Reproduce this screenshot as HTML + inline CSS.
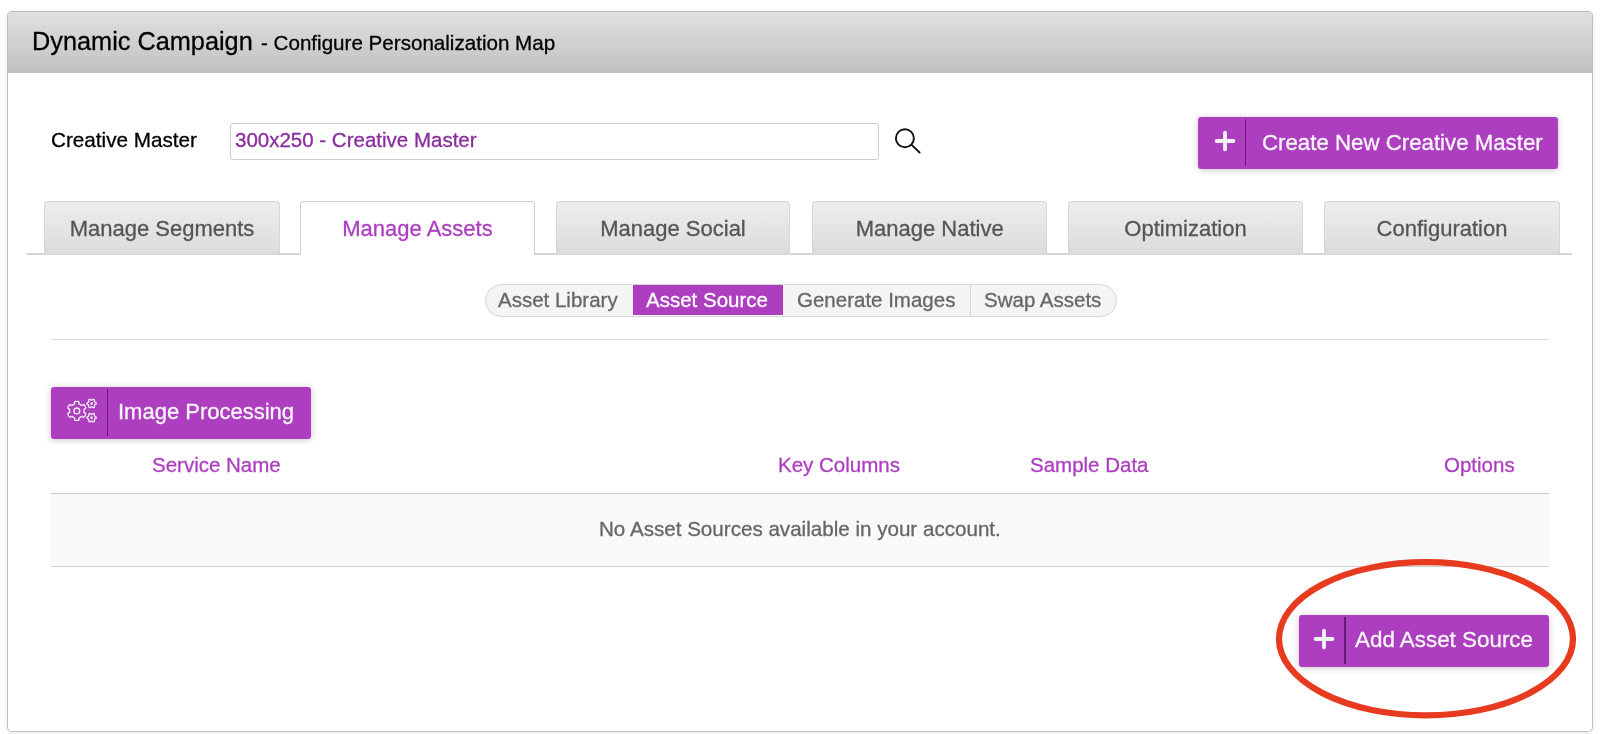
<!DOCTYPE html>
<html><head><meta charset="utf-8"><style>
html,body{margin:0;padding:0;background:#fff;width:1600px;height:734px;overflow:hidden;}
body{font-family:"Liberation Sans",sans-serif;position:relative;}
.t{position:absolute;white-space:nowrap;will-change:transform;-webkit-text-stroke:0.3px currentColor;}
.abs{position:absolute;box-sizing:border-box;}
</style></head><body>
<div class="abs" style="left:7px;top:11px;width:1586px;height:721px;border:1px solid #c2c2c2;border-top-color:#bababa;border-radius:5px;box-shadow:0 1px 4px rgba(0,0,0,0.10);background:#fff;"></div>
<div class="abs" style="left:8px;top:12px;width:1584px;height:61px;border-radius:4px 4px 0 0;background:linear-gradient(#e0e0e0,#c1c1c1);"></div>
<div class="t" style="left:32px;top:26.33px;font-size:25.3px;line-height:30px;color:#000;">Dynamic Campaign</div>
<div class="t" style="left:260.8px;top:30.36px;font-size:20.6px;line-height:25px;color:#000;">- Configure Personalization Map</div>
<div class="t" style="left:51px;top:126.73px;font-size:20.7px;line-height:25px;color:#000;">Creative Master</div>
<div class="abs" style="left:229.5px;top:122.5px;width:649.5px;height:37px;border:1px solid #cbcbcb;border-radius:3px;background:#fff;"></div>
<div class="t" style="left:235px;top:127.10px;font-size:20.5px;line-height:25px;color:#8a2c9c;">300x250 - Creative Master</div>
<svg class="abs" style="left:890px;top:124px" width="36" height="36" viewBox="0 0 36 36"><circle cx="14.9" cy="14.2" r="9" fill="none" stroke="#111" stroke-width="1.9"/><line x1="21.6" y1="20.9" x2="29.6" y2="28.5" stroke="#111" stroke-width="1.9" stroke-linecap="round"/></svg>
<div class="abs" style="left:1198px;top:117px;width:360px;height:52px;background:#ad3ec0;border-radius:3px;box-shadow:0 1px 7px rgba(0,0,0,0.22);"></div>
<div class="abs" style="left:1244.5px;top:119px;width:1.7px;height:47px;background:#621d72;"></div>
<svg class="abs" style="left:1210px;top:126.4px" width="30" height="30" viewBox="0 0 30 30"><path d="M15 6.6V23.4M6.6 15H23.4" stroke="#f3f3f3" stroke-width="3.8" stroke-linecap="round"/></svg>
<div class="t" style="left:1262.3px;top:129.49px;font-size:22.25px;line-height:27px;color:#f6f6f6;">Create New Creative Master</div>
<div class="abs" style="left:27px;top:253px;width:1545px;height:1.5px;background:#d5d5d5;"></div>
<div class="abs" style="left:43.5px;top:201px;width:236px;height:53px;border:1px solid #d6d6d6;border-bottom:none;border-radius:4px 4px 0 0;background:linear-gradient(#ededed,#dcdcdc);"></div>
<div class="t" style="left:43.5px;top:213.98px;width:236px;text-align:center;font-size:22px;line-height:30px;color:#555">Manage Segments</div>
<div class="abs" style="left:299.5px;top:201px;width:235px;height:54px;border:1px solid #d0d0d0;border-bottom:none;border-radius:4px 4px 0 0;background:#fff;"></div>
<div class="t" style="left:299.5px;top:213.98px;width:235px;text-align:center;font-size:22px;line-height:30px;color:#ad3ec0">Manage Assets</div>
<div class="abs" style="left:556px;top:201px;width:234px;height:53px;border:1px solid #d6d6d6;border-bottom:none;border-radius:4px 4px 0 0;background:linear-gradient(#ededed,#dcdcdc);"></div>
<div class="t" style="left:556px;top:213.98px;width:234px;text-align:center;font-size:22px;line-height:30px;color:#555">Manage Social</div>
<div class="abs" style="left:811.5px;top:201px;width:235.5px;height:53px;border:1px solid #d6d6d6;border-bottom:none;border-radius:4px 4px 0 0;background:linear-gradient(#ededed,#dcdcdc);"></div>
<div class="t" style="left:811.5px;top:213.98px;width:235.5px;text-align:center;font-size:22px;line-height:30px;color:#555">Manage Native</div>
<div class="abs" style="left:1068px;top:201px;width:235px;height:53px;border:1px solid #d6d6d6;border-bottom:none;border-radius:4px 4px 0 0;background:linear-gradient(#ededed,#dcdcdc);"></div>
<div class="t" style="left:1068px;top:213.98px;width:235px;text-align:center;font-size:22px;line-height:30px;color:#555">Optimization</div>
<div class="abs" style="left:1324px;top:201px;width:236px;height:53px;border:1px solid #d6d6d6;border-bottom:none;border-radius:4px 4px 0 0;background:linear-gradient(#ededed,#dcdcdc);"></div>
<div class="t" style="left:1324px;top:213.98px;width:236px;text-align:center;font-size:22px;line-height:30px;color:#555">Configuration</div>
<div class="abs" style="left:484.5px;top:283.5px;width:632px;height:33px;border:1px solid #d6d6d6;border-radius:17px;background:#f4f4f4;overflow:hidden;"></div>
<div class="abs" style="left:633px;top:285px;width:149.5px;height:30px;background:#ad3ec0;"></div>
<div class="abs" style="left:970px;top:284.5px;width:1px;height:31px;background:#d6d6d6;"></div>
<div class="t" style="left:497.8px;top:287.30px;font-size:20.5px;line-height:25px;color:#666;">Asset Library</div>
<div class="t" style="left:645.6px;top:287.30px;font-size:20.5px;line-height:25px;color:#fff;">Asset Source</div>
<div class="t" style="left:796.8px;top:287.30px;font-size:20.5px;line-height:25px;color:#666;">Generate Images</div>
<div class="t" style="left:983.9px;top:287.30px;font-size:20.5px;line-height:25px;color:#666;">Swap Assets</div>
<div class="abs" style="left:51px;top:339px;width:1498px;height:1px;background:#dcdcdc;"></div>
<div class="abs" style="left:51px;top:386.5px;width:260px;height:52px;background:#ad3ec0;border-radius:3px;box-shadow:0 1px 7px rgba(0,0,0,0.22);"></div>
<div class="abs" style="left:106.5px;top:388.5px;width:1.7px;height:47px;background:#621d72;"></div>
<svg class="abs" style="left:62px;top:395px" width="40" height="32" viewBox="0 0 40 32"><g fill="none" stroke="#f0f0f0" stroke-width="1.35" stroke-linejoin="round"><path d="M22.00 15.90 L22.00 15.71 L21.99 15.52 L21.98 15.34 L21.96 15.15 L21.94 14.96 L21.92 14.77 L21.92 14.58 L22.00 14.37 L22.37 14.08 L23.14 13.67 L23.66 13.28 L23.78 12.98 L23.74 12.73 L23.67 12.50 L23.58 12.26 L23.48 12.04 L23.37 11.81 L23.26 11.59 L23.15 11.37 L23.03 11.15 L22.90 10.94 L22.77 10.73 L22.63 10.52 L22.49 10.32 L22.34 10.12 L22.18 9.92 L22.01 9.74 L21.81 9.58 L21.50 9.54 L20.90 9.80 L20.16 10.25 L19.73 10.43 L19.50 10.39 L19.34 10.30 L19.19 10.19 L19.03 10.07 L18.88 9.97 L18.72 9.86 L18.56 9.76 L18.40 9.66 L18.24 9.57 L18.07 9.48 L17.90 9.40 L17.73 9.32 L17.56 9.25 L17.38 9.17 L17.22 9.08 L17.07 8.90 L17.01 8.43 L17.03 7.56 L16.96 6.91 L16.76 6.67 L16.53 6.57 L16.29 6.52 L16.04 6.48 L15.79 6.45 L15.55 6.43 L15.30 6.41 L15.05 6.40 L14.80 6.40 L14.55 6.40 L14.30 6.41 L14.05 6.43 L13.81 6.45 L13.56 6.48 L13.31 6.52 L13.07 6.57 L12.84 6.67 L12.64 6.91 L12.57 7.56 L12.59 8.43 L12.53 8.90 L12.38 9.08 L12.22 9.17 L12.04 9.25 L11.87 9.32 L11.70 9.40 L11.53 9.48 L11.36 9.57 L11.20 9.66 L11.04 9.76 L10.88 9.86 L10.72 9.97 L10.57 10.07 L10.41 10.19 L10.26 10.30 L10.10 10.39 L9.87 10.43 L9.44 10.25 L8.70 9.80 L8.10 9.54 L7.79 9.58 L7.59 9.74 L7.42 9.92 L7.26 10.12 L7.11 10.32 L6.97 10.52 L6.83 10.73 L6.70 10.94 L6.57 11.15 L6.45 11.37 L6.34 11.59 L6.23 11.81 L6.12 12.04 L6.02 12.26 L5.93 12.50 L5.86 12.73 L5.82 12.98 L5.94 13.28 L6.46 13.67 L7.23 14.08 L7.60 14.37 L7.68 14.58 L7.68 14.77 L7.66 14.96 L7.64 15.15 L7.62 15.34 L7.61 15.52 L7.60 15.71 L7.60 15.90 L7.60 16.09 L7.61 16.28 L7.62 16.46 L7.64 16.65 L7.66 16.84 L7.68 17.03 L7.68 17.22 L7.60 17.43 L7.23 17.72 L6.46 18.13 L5.94 18.52 L5.82 18.82 L5.86 19.07 L5.93 19.30 L6.02 19.54 L6.12 19.76 L6.23 19.99 L6.34 20.21 L6.45 20.43 L6.57 20.65 L6.70 20.86 L6.83 21.07 L6.97 21.28 L7.11 21.48 L7.26 21.68 L7.42 21.88 L7.59 22.06 L7.79 22.22 L8.10 22.26 L8.70 22.00 L9.44 21.55 L9.87 21.37 L10.10 21.41 L10.26 21.50 L10.41 21.61 L10.57 21.73 L10.72 21.83 L10.88 21.94 L11.04 22.04 L11.20 22.14 L11.36 22.23 L11.53 22.32 L11.70 22.40 L11.87 22.48 L12.04 22.55 L12.22 22.63 L12.38 22.72 L12.53 22.90 L12.59 23.37 L12.57 24.24 L12.64 24.89 L12.84 25.13 L13.07 25.23 L13.31 25.28 L13.56 25.32 L13.81 25.35 L14.05 25.37 L14.30 25.39 L14.55 25.40 L14.80 25.40 L15.05 25.40 L15.30 25.39 L15.55 25.37 L15.79 25.35 L16.04 25.32 L16.29 25.28 L16.53 25.23 L16.76 25.13 L16.96 24.89 L17.03 24.24 L17.01 23.37 L17.07 22.90 L17.22 22.72 L17.38 22.63 L17.56 22.55 L17.73 22.48 L17.90 22.40 L18.07 22.32 L18.24 22.23 L18.40 22.14 L18.56 22.04 L18.72 21.94 L18.88 21.83 L19.03 21.73 L19.19 21.61 L19.34 21.50 L19.50 21.41 L19.73 21.37 L20.16 21.55 L20.90 22.00 L21.50 22.26 L21.81 22.22 L22.01 22.06 L22.18 21.88 L22.34 21.68 L22.49 21.48 L22.63 21.28 L22.77 21.07 L22.90 20.86 L23.03 20.65 L23.15 20.43 L23.26 20.21 L23.37 19.99 L23.48 19.76 L23.58 19.54 L23.67 19.30 L23.74 19.07 L23.78 18.82 L23.66 18.52 L23.14 18.13 L22.37 17.72 L22.00 17.43 L21.92 17.22 L21.92 17.03 L21.94 16.84 L21.96 16.65 L21.98 16.46 L21.99 16.28 L22.00 16.09Z"/><circle cx="14.8" cy="15.9" r="2.9"/><path d="M34.20 8.50 L34.20 8.38 L34.18 8.26 L34.16 8.14 L34.13 8.02 L34.08 7.91 L34.01 7.80 L33.92 7.70 L33.79 7.61 L33.64 7.53 L33.46 7.46 L33.29 7.41 L33.13 7.35 L33.00 7.30 L32.90 7.23 L32.81 7.17 L32.75 7.10 L32.69 7.03 L32.64 6.95 L32.59 6.88 L32.54 6.80 L32.50 6.72 L32.46 6.64 L32.42 6.56 L32.39 6.48 L32.36 6.38 L32.34 6.28 L32.34 6.16 L32.36 6.02 L32.39 5.85 L32.43 5.67 L32.46 5.49 L32.47 5.31 L32.45 5.16 L32.41 5.03 L32.35 4.91 L32.28 4.81 L32.19 4.73 L32.10 4.65 L32.00 4.58 L31.90 4.52 L31.79 4.46 L31.68 4.41 L31.57 4.37 L31.45 4.34 L31.33 4.32 L31.20 4.33 L31.07 4.36 L30.92 4.42 L30.78 4.52 L30.64 4.64 L30.50 4.76 L30.37 4.87 L30.26 4.95 L30.15 5.01 L30.05 5.05 L29.96 5.07 L29.87 5.09 L29.78 5.10 L29.69 5.10 L29.60 5.10 L29.51 5.10 L29.42 5.10 L29.33 5.09 L29.24 5.07 L29.15 5.05 L29.05 5.01 L28.94 4.95 L28.83 4.87 L28.70 4.76 L28.56 4.64 L28.42 4.52 L28.28 4.42 L28.13 4.36 L28.00 4.33 L27.87 4.32 L27.75 4.34 L27.63 4.37 L27.52 4.41 L27.41 4.46 L27.30 4.52 L27.20 4.58 L27.10 4.65 L27.01 4.73 L26.92 4.81 L26.85 4.91 L26.79 5.03 L26.75 5.16 L26.73 5.31 L26.74 5.49 L26.77 5.67 L26.81 5.85 L26.84 6.02 L26.86 6.16 L26.86 6.28 L26.84 6.38 L26.81 6.48 L26.78 6.56 L26.74 6.64 L26.70 6.72 L26.66 6.80 L26.61 6.88 L26.56 6.95 L26.51 7.03 L26.45 7.10 L26.39 7.17 L26.30 7.23 L26.20 7.30 L26.07 7.35 L25.91 7.41 L25.74 7.46 L25.56 7.53 L25.41 7.61 L25.28 7.70 L25.19 7.80 L25.12 7.91 L25.07 8.02 L25.04 8.14 L25.02 8.26 L25.00 8.38 L25.00 8.50 L25.00 8.62 L25.02 8.74 L25.04 8.86 L25.07 8.98 L25.12 9.09 L25.19 9.20 L25.28 9.30 L25.41 9.39 L25.56 9.47 L25.74 9.54 L25.91 9.59 L26.07 9.65 L26.20 9.70 L26.30 9.77 L26.39 9.83 L26.45 9.90 L26.51 9.97 L26.56 10.05 L26.61 10.12 L26.66 10.20 L26.70 10.28 L26.74 10.36 L26.78 10.44 L26.81 10.52 L26.84 10.62 L26.86 10.72 L26.86 10.84 L26.84 10.98 L26.81 11.15 L26.77 11.33 L26.74 11.51 L26.73 11.69 L26.75 11.84 L26.79 11.97 L26.85 12.09 L26.92 12.19 L27.01 12.27 L27.10 12.35 L27.20 12.42 L27.30 12.48 L27.41 12.54 L27.52 12.59 L27.63 12.63 L27.75 12.66 L27.87 12.68 L28.00 12.67 L28.13 12.64 L28.28 12.58 L28.42 12.48 L28.56 12.36 L28.70 12.24 L28.83 12.13 L28.94 12.05 L29.05 11.99 L29.15 11.95 L29.24 11.93 L29.33 11.91 L29.42 11.90 L29.51 11.90 L29.60 11.90 L29.69 11.90 L29.78 11.90 L29.87 11.91 L29.96 11.93 L30.05 11.95 L30.15 11.99 L30.26 12.05 L30.37 12.13 L30.50 12.24 L30.64 12.36 L30.78 12.48 L30.92 12.58 L31.07 12.64 L31.20 12.67 L31.33 12.68 L31.45 12.66 L31.57 12.63 L31.68 12.59 L31.79 12.54 L31.90 12.48 L32.00 12.42 L32.10 12.35 L32.19 12.27 L32.28 12.19 L32.35 12.09 L32.41 11.97 L32.45 11.84 L32.47 11.69 L32.46 11.51 L32.43 11.33 L32.39 11.15 L32.36 10.98 L32.34 10.84 L32.34 10.72 L32.36 10.62 L32.39 10.52 L32.42 10.44 L32.46 10.36 L32.50 10.28 L32.54 10.20 L32.59 10.12 L32.64 10.05 L32.69 9.97 L32.75 9.90 L32.81 9.83 L32.90 9.77 L33.00 9.70 L33.13 9.65 L33.29 9.59 L33.46 9.54 L33.64 9.47 L33.79 9.39 L33.92 9.30 L34.01 9.20 L34.08 9.09 L34.13 8.98 L34.16 8.86 L34.18 8.74 L34.20 8.62Z"/><path d="M34.20 22.70 L34.20 22.58 L34.18 22.46 L34.16 22.34 L34.13 22.22 L34.08 22.11 L34.01 22.00 L33.92 21.90 L33.79 21.81 L33.64 21.73 L33.46 21.66 L33.29 21.61 L33.13 21.55 L33.00 21.50 L32.90 21.43 L32.81 21.37 L32.75 21.30 L32.69 21.23 L32.64 21.15 L32.59 21.08 L32.54 21.00 L32.50 20.92 L32.46 20.84 L32.42 20.76 L32.39 20.68 L32.36 20.58 L32.34 20.48 L32.34 20.36 L32.36 20.22 L32.39 20.05 L32.43 19.87 L32.46 19.69 L32.47 19.51 L32.45 19.36 L32.41 19.23 L32.35 19.11 L32.28 19.01 L32.19 18.93 L32.10 18.85 L32.00 18.78 L31.90 18.72 L31.79 18.66 L31.68 18.61 L31.57 18.57 L31.45 18.54 L31.33 18.52 L31.20 18.53 L31.07 18.56 L30.92 18.62 L30.78 18.72 L30.64 18.84 L30.50 18.96 L30.37 19.07 L30.26 19.15 L30.15 19.21 L30.05 19.25 L29.96 19.27 L29.87 19.29 L29.78 19.30 L29.69 19.30 L29.60 19.30 L29.51 19.30 L29.42 19.30 L29.33 19.29 L29.24 19.27 L29.15 19.25 L29.05 19.21 L28.94 19.15 L28.83 19.07 L28.70 18.96 L28.56 18.84 L28.42 18.72 L28.28 18.62 L28.13 18.56 L28.00 18.53 L27.87 18.52 L27.75 18.54 L27.63 18.57 L27.52 18.61 L27.41 18.66 L27.30 18.72 L27.20 18.78 L27.10 18.85 L27.01 18.93 L26.92 19.01 L26.85 19.11 L26.79 19.23 L26.75 19.36 L26.73 19.51 L26.74 19.69 L26.77 19.87 L26.81 20.05 L26.84 20.22 L26.86 20.36 L26.86 20.48 L26.84 20.58 L26.81 20.68 L26.78 20.76 L26.74 20.84 L26.70 20.92 L26.66 21.00 L26.61 21.08 L26.56 21.15 L26.51 21.23 L26.45 21.30 L26.39 21.37 L26.30 21.43 L26.20 21.50 L26.07 21.55 L25.91 21.61 L25.74 21.66 L25.56 21.73 L25.41 21.81 L25.28 21.90 L25.19 22.00 L25.12 22.11 L25.07 22.22 L25.04 22.34 L25.02 22.46 L25.00 22.58 L25.00 22.70 L25.00 22.82 L25.02 22.94 L25.04 23.06 L25.07 23.18 L25.12 23.29 L25.19 23.40 L25.28 23.50 L25.41 23.59 L25.56 23.67 L25.74 23.74 L25.91 23.79 L26.07 23.85 L26.20 23.90 L26.30 23.97 L26.39 24.03 L26.45 24.10 L26.51 24.17 L26.56 24.25 L26.61 24.32 L26.66 24.40 L26.70 24.48 L26.74 24.56 L26.78 24.64 L26.81 24.72 L26.84 24.82 L26.86 24.92 L26.86 25.04 L26.84 25.18 L26.81 25.35 L26.77 25.53 L26.74 25.71 L26.73 25.89 L26.75 26.04 L26.79 26.17 L26.85 26.29 L26.92 26.39 L27.01 26.47 L27.10 26.55 L27.20 26.62 L27.30 26.68 L27.41 26.74 L27.52 26.79 L27.63 26.83 L27.75 26.86 L27.87 26.88 L28.00 26.87 L28.13 26.84 L28.28 26.78 L28.42 26.68 L28.56 26.56 L28.70 26.44 L28.83 26.33 L28.94 26.25 L29.05 26.19 L29.15 26.15 L29.24 26.13 L29.33 26.11 L29.42 26.10 L29.51 26.10 L29.60 26.10 L29.69 26.10 L29.78 26.10 L29.87 26.11 L29.96 26.13 L30.05 26.15 L30.15 26.19 L30.26 26.25 L30.37 26.33 L30.50 26.44 L30.64 26.56 L30.78 26.68 L30.92 26.78 L31.07 26.84 L31.20 26.87 L31.33 26.88 L31.45 26.86 L31.57 26.83 L31.68 26.79 L31.79 26.74 L31.90 26.68 L32.00 26.62 L32.10 26.55 L32.19 26.47 L32.28 26.39 L32.35 26.29 L32.41 26.17 L32.45 26.04 L32.47 25.89 L32.46 25.71 L32.43 25.53 L32.39 25.35 L32.36 25.18 L32.34 25.04 L32.34 24.92 L32.36 24.82 L32.39 24.72 L32.42 24.64 L32.46 24.56 L32.50 24.48 L32.54 24.40 L32.59 24.32 L32.64 24.25 L32.69 24.17 L32.75 24.10 L32.81 24.03 L32.90 23.97 L33.00 23.90 L33.13 23.85 L33.29 23.79 L33.46 23.74 L33.64 23.67 L33.79 23.59 L33.92 23.50 L34.01 23.40 L34.08 23.29 L34.13 23.18 L34.16 23.06 L34.18 22.94 L34.20 22.82Z"/></g><g fill="#f4f4f4"><circle cx="29.6" cy="8.5" r="1.25"/><circle cx="29.6" cy="22.7" r="1.25"/></g></svg>
<div class="t" style="left:118px;top:399.38px;font-size:22px;line-height:26px;color:#f6f6f6;">Image Processing</div>
<div class="t" style="left:151.8px;top:452.20px;font-size:20.5px;line-height:25px;color:#ad3ec0;">Service Name</div>
<div class="t" style="left:777.5px;top:452.20px;font-size:20.5px;line-height:25px;color:#ad3ec0;">Key Columns</div>
<div class="t" style="left:1030px;top:452.20px;font-size:20.5px;line-height:25px;color:#ad3ec0;">Sample Data</div>
<div class="t" style="left:1444.4px;top:452.20px;font-size:20.5px;line-height:25px;color:#ad3ec0;">Options</div>
<div class="abs" style="left:51px;top:492.5px;width:1498px;height:74.5px;background:#f9f9f9;border-top:1.7px solid #c9c9c9;border-bottom:1.7px solid #cfcfcf;"></div>
<div class="t" style="left:599.3px;top:515.96px;font-size:20.6px;line-height:25px;color:#666;">No Asset Sources available in your account.</div>
<div class="abs" style="left:1298.5px;top:614.5px;width:250.5px;height:52px;background:#ad3ec0;border-radius:3px;box-shadow:0 1px 7px rgba(0,0,0,0.22);"></div>
<div class="abs" style="left:1344px;top:616.5px;width:1.7px;height:47px;background:#621d72;"></div>
<svg class="abs" style="left:1309.15px;top:623.95px" width="30" height="30" viewBox="0 0 30 30"><path d="M15 6.6V23.4M6.6 15H23.4" stroke="#f3f3f3" stroke-width="3.8" stroke-linecap="round"/></svg>
<div class="t" style="left:1354.5px;top:626.44px;font-size:22.4px;line-height:27px;color:#f6f6f6;">Add Asset Source</div>
<svg class="abs" style="left:0;top:0" width="1600" height="734"><ellipse cx="1426" cy="638.75" rx="147" ry="76.6" fill="none" stroke="#e73b20" stroke-width="6.3"/></svg>
</body></html>
